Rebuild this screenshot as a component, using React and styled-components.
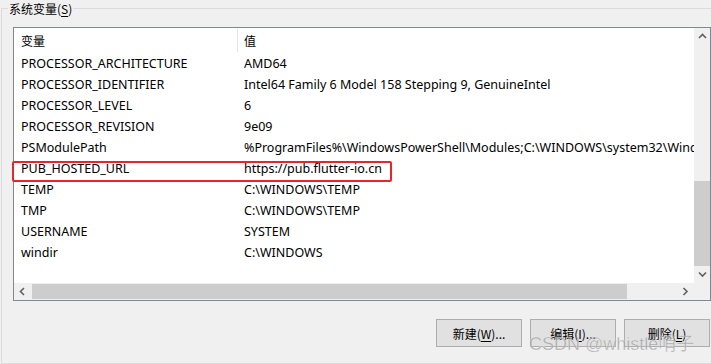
import React from "react";
import styled, { createGlobalStyle } from "styled-components";

const GlobalStyle = createGlobalStyle`
  html, body { margin: 0; padding: 0; }
  body {
    background: #f0f0f0;
    width: 711px;
    height: 364px;
    overflow: hidden;
    font-family: "Noto Sans", "Noto Sans CJK SC", sans-serif;
    font-size: 12px;
    color: #000;
  }
`;

const Page = styled.div`
  position: relative;
  width: 711px;
  height: 364px;
  overflow: hidden;
  background: #f0f0f0;
`;

const GroupBox = styled.fieldset`
  box-sizing: border-box;
  margin: 0 0 0 1px;
  width: 740px;
  height: 364px;
  border: 1px solid #dcdcdc;
  padding: 10px 0 0 11px;
`;

const Legend = styled.legend`
  margin-left: -5px;
  padding: 0 1px;
  font-size: 12px;
  line-height: 17px;
  font-family: "Noto Sans CJK SC", "Noto Sans", sans-serif;
`;

const Key = styled.span`
  text-decoration: underline;
  text-underline-offset: 2px;
`;

const ListBox = styled.div`
  box-sizing: border-box;
  width: 698px;
  height: 274px;
  border: 1px solid #828790;
  background: #fff;
  display: grid;
  grid-template-columns: 1fr 17px;
  grid-template-rows: 1fr 17px;
  overflow: hidden;
`;

const Table = styled.div`
  display: flex;
  flex-direction: column;
  overflow: hidden;
  min-width: 0;
`;

const Header = styled.div`
  display: grid;
  grid-template-columns: 223px 1px 1fr;
  height: 25px;
  align-items: center;
  font-family: "Noto Sans CJK SC", sans-serif;
`;

const HeaderCell = styled.div`
  padding-left: ${(p) => p.$pad}px;
  line-height: 25px;
`;

const Sep = styled.div`
  width: 1px;
  height: 23px;
  background: #e5e5e5;
`;

const Row = styled.div`
  display: grid;
  grid-template-columns: 230px 1fr;
  height: 21px;
  line-height: 21px;
  font-size: 12.5px;
  white-space: nowrap;
`;

const Cell = styled.div`
  padding-left: ${(p) => p.$pad || 0}px;
  overflow: hidden;
`;

const VScroll = styled.div`
  background: #f0f0f0;
  display: flex;
  flex-direction: column;
`;

const HScroll = styled.div`
  background: #f0f0f0;
  display: flex;
  align-items: stretch;
`;

const Corner = styled.div`
  background: #f0f0f0;
`;

const ArrowBtn = styled.div`
  flex: 0 0 17px;
  width: 17px;
  height: 17px;
  display: flex;
  align-items: center;
  justify-content: center;
`;

const Spacer = styled.div`
  flex: 0 0 ${(p) => p.$size}px;
`;

const VThumb = styled.div`
  flex: 0 0 ${(p) => p.$size}px;
  margin: 0 1px 0 0;
  background: #cdcdcd;
`;

const HThumb = styled.div`
  flex: 0 0 ${(p) => p.$size}px;
  margin: 1px 0 1px 1px;
  background: #cdcdcd;
`;

const ButtonRow = styled.div`
  width: 698px;
  display: flex;
  justify-content: flex-end;
  gap: 8px;
  margin-top: 18px;
  padding-right: 1px;
  box-sizing: border-box;
`;

const Button = styled.div`
  box-sizing: border-box;
  width: 86px;
  height: 28px;
  border: 1px solid #adadad;
  background: #e1e1e1;
  display: flex;
  align-items: center;
  justify-content: center;
  font-family: "Noto Sans CJK SC", "Noto Sans", sans-serif;
  font-size: 12px;
`;

const Highlight = styled.div`
  position: absolute;
  left: 12px;
  top: 161px;
  width: 380px;
  height: 21px;
  box-sizing: border-box;
  border: 2px solid #e8242c;
  border-radius: 2px;
  pointer-events: none;
`;

const Watermark = styled.div`
  position: absolute;
  left: 529px;
  top: 334px;
  font-family: "Liberation Sans", "Noto Sans CJK SC", sans-serif;
  font-size: 18px;
  line-height: 20px;
  color: rgba(150, 150, 150, 0.75);
  -webkit-text-stroke: 0.4px rgba(255, 255, 255, 0.6);
  white-space: nowrap;
  pointer-events: none;
`;

const Chevron = ({ dir }) => {
  const pts = {
    up: "1,5 4.5,1.5 8,5",
    down: "1,1.5 4.5,5 8,1.5",
    left: "5,1 1.5,4.5 5,8",
    right: "1.5,1 5,4.5 1.5,8",
  }[dir];
  const vertical = dir === "up" || dir === "down";
  return (
    <svg
      width={vertical ? 9 : 7}
      height={vertical ? 7 : 9}
      viewBox={vertical ? "0 0 9 7" : "0 0 7 9"}
    >
      <polyline points={pts} fill="none" stroke="#606060" strokeWidth="1.6" />
    </svg>
  );
};

const rows = [
  ["PROCESSOR_ARCHITECTURE", "AMD64"],
  ["PROCESSOR_IDENTIFIER", "Intel64 Family 6 Model 158 Stepping 9, GenuineIntel"],
  ["PROCESSOR_LEVEL", "6"],
  ["PROCESSOR_REVISION", "9e09"],
  [
    "PSModulePath",
    "%ProgramFiles%\\WindowsPowerShell\\Modules;C:\\WINDOWS\\system32\\WindowsPowerShell\\v1.0\\Modules",
  ],
  ["PUB_HOSTED_URL", "https://pub.flutter-io.cn"],
  ["TEMP", "C:\\WINDOWS\\TEMP"],
  ["TMP", "C:\\WINDOWS\\TEMP"],
  ["USERNAME", "SYSTEM"],
  ["windir", "C:\\WINDOWS"],
];

export default function App() {
  return (
    <Page>
      <GlobalStyle />
      <GroupBox>
        <Legend>
          系统变量(<Key>S</Key>)
        </Legend>
        <ListBox>
          <Table>
            <Header>
              <HeaderCell $pad={7}>变量</HeaderCell>
              <Sep />
              <HeaderCell $pad={6}>值</HeaderCell>
            </Header>
            {rows.map(([k, v]) => (
              <Row key={k}>
                <Cell $pad={7}>{k}</Cell>
                <Cell>{v}</Cell>
              </Row>
            ))}
          </Table>
          <VScroll>
            <ArrowBtn>
              <Chevron dir="up" />
            </ArrowBtn>
            <Spacer $size={136} />
            <VThumb $size={85} />
            <ArrowBtn>
              <Chevron dir="down" />
            </ArrowBtn>
          </VScroll>
          <HScroll>
            <ArrowBtn>
              <Chevron dir="left" />
            </ArrowBtn>
            <HThumb $size={595} />
            <Spacer $size={50} />
            <ArrowBtn>
              <Chevron dir="right" />
            </ArrowBtn>
          </HScroll>
          <Corner />
        </ListBox>
        <ButtonRow>
          <Button>
            新建(<Key>W</Key>)...
          </Button>
          <Button>
            编辑(<Key>I</Key>)...
          </Button>
          <Button>
            删除(<Key>L</Key>)
          </Button>
        </ButtonRow>
      </GroupBox>
      <Highlight />
      <Watermark>CSDN @whistle哨子</Watermark>
    </Page>
  );
}
